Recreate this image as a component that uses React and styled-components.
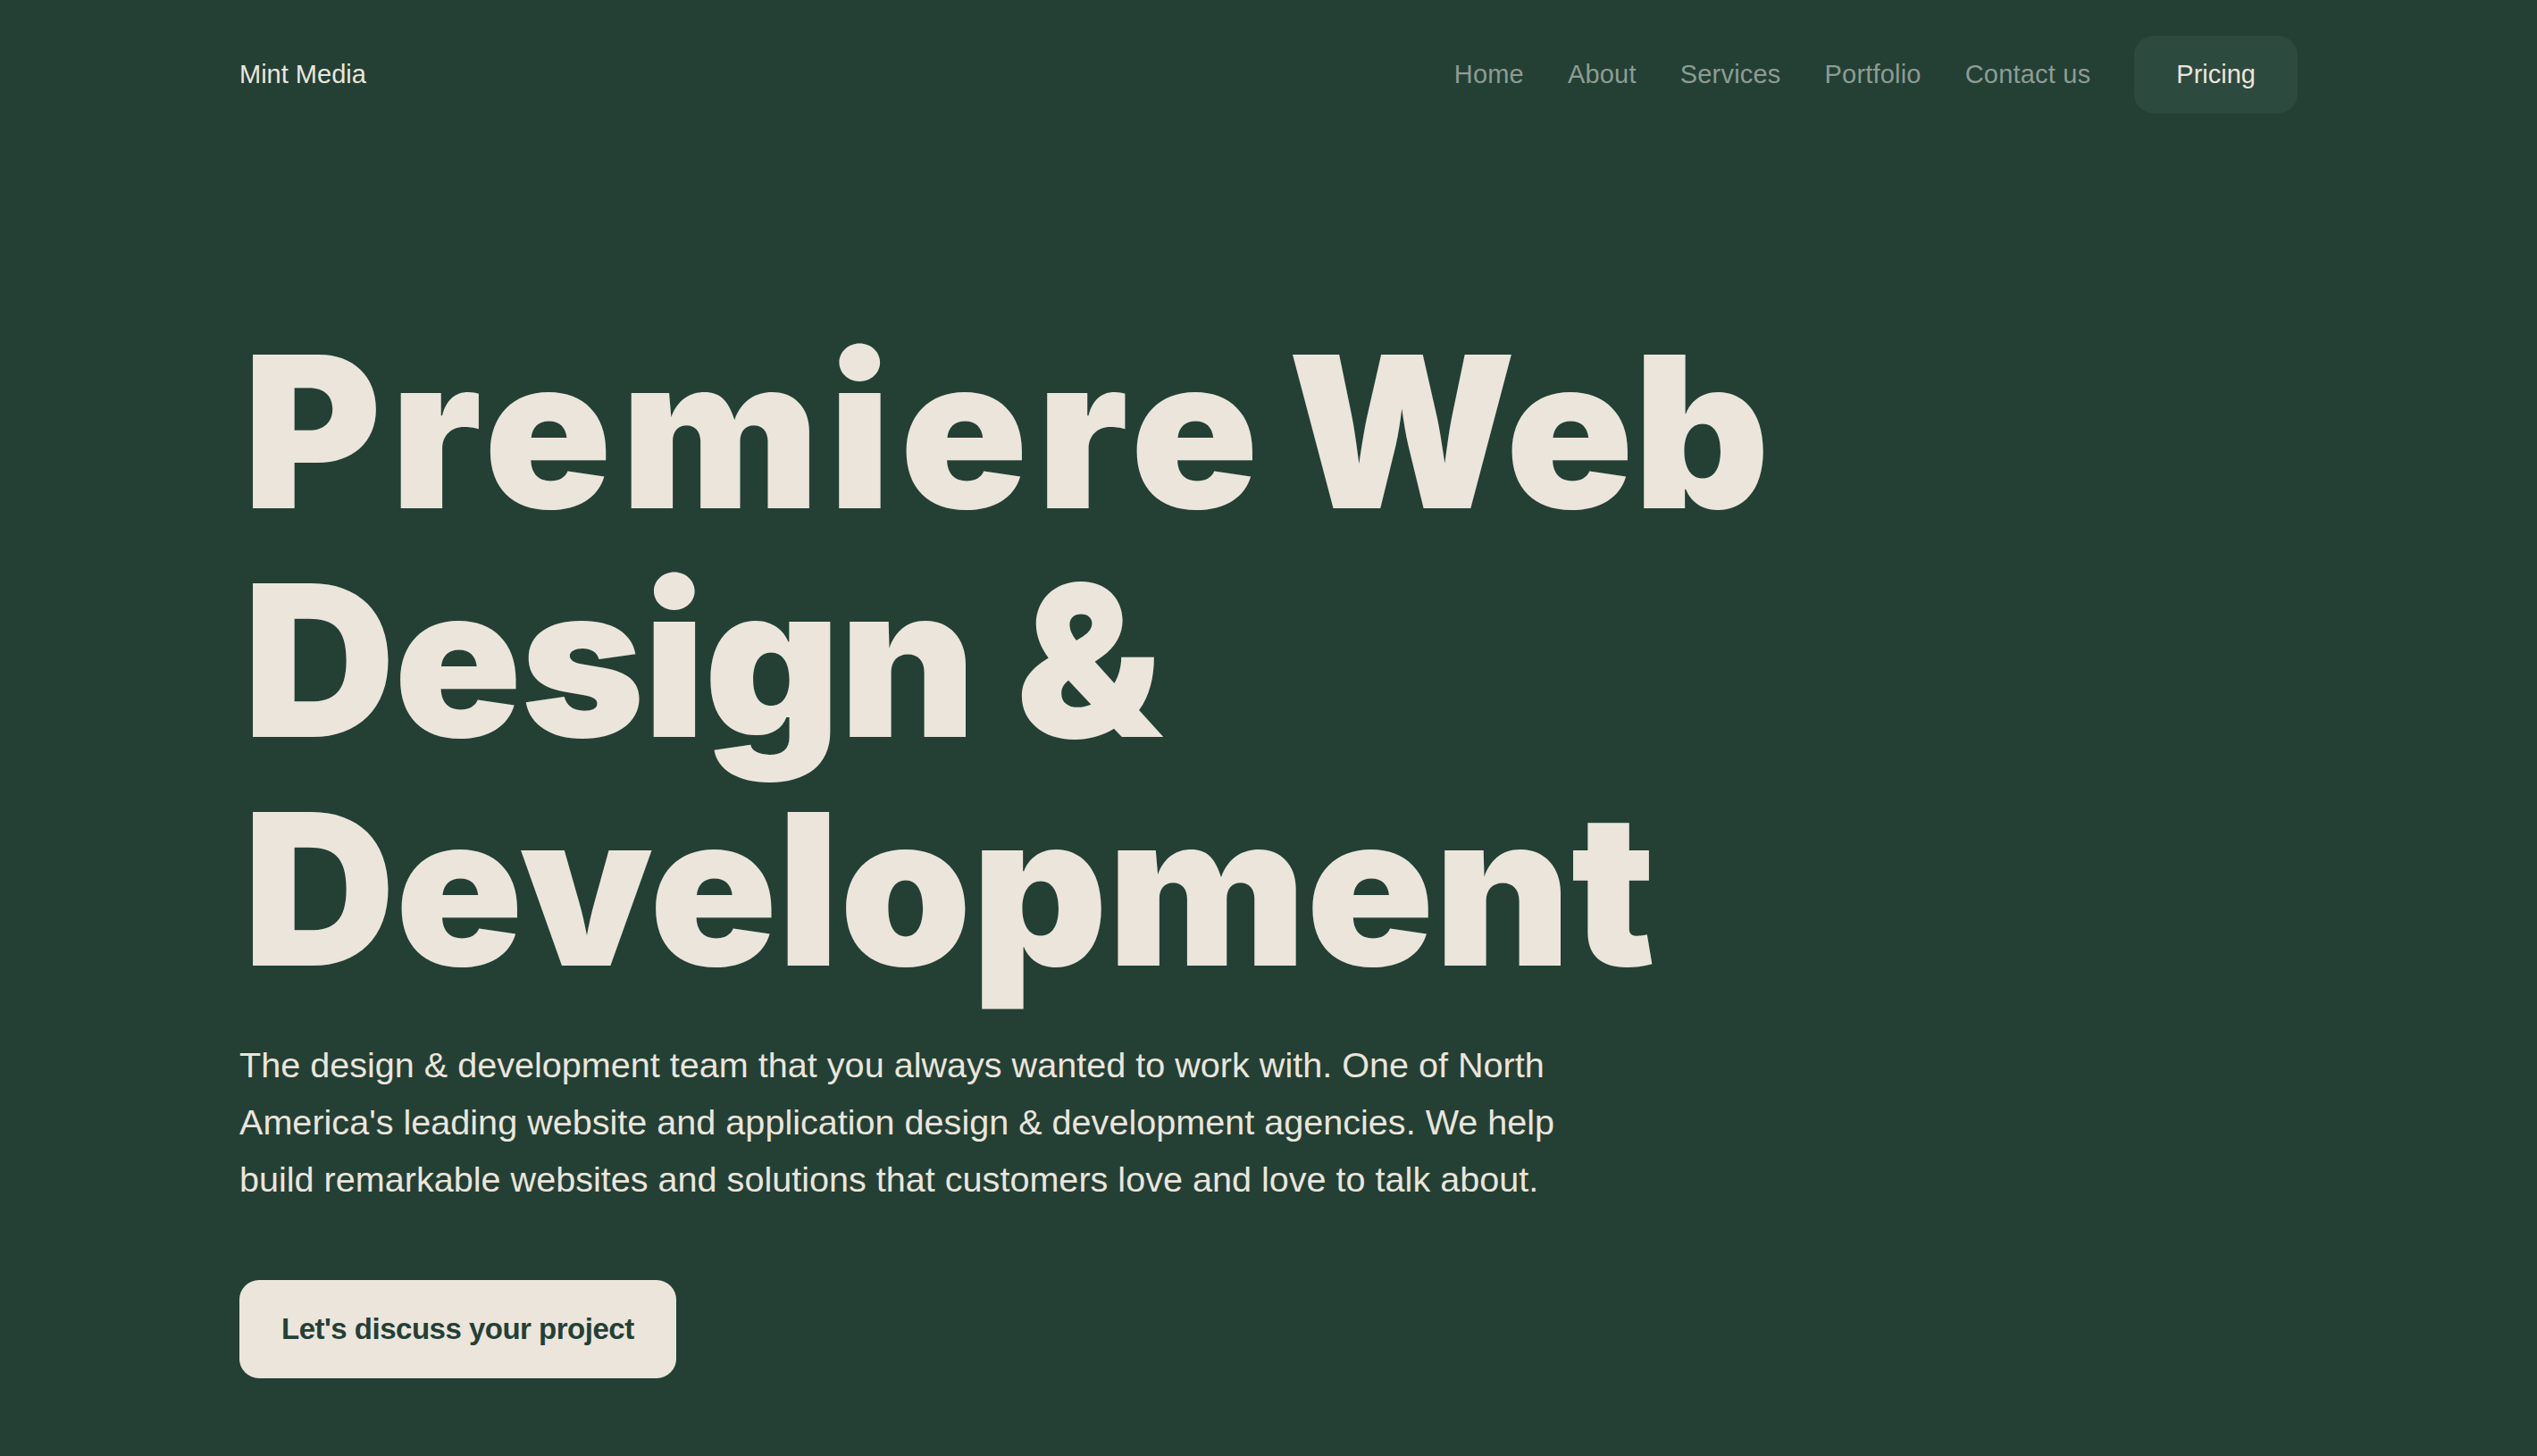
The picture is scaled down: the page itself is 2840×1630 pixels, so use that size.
import React from "react";
import styled, { createGlobalStyle } from "styled-components";

const Global = createGlobalStyle`
  html, body {
    margin: 0;
    padding: 0;
    background: #244035;
  }
  * { box-sizing: border-box; }
`;

const Page = styled.div`
  min-height: 1630px;
  background: #244035;
  color: #ebe5dc;
  font-family: "Liberation Sans", Arial, sans-serif;
`;

const Container = styled.div`
  width: 2304px;
  margin: 0 auto;
`;

const Header = styled.header`
  display: flex;
  align-items: center;
  justify-content: space-between;
  padding-top: 40px;
  height: 127px;
`;

const Logo = styled.a`
  font-size: 29px;
  color: #ebe5dc;
  text-decoration: none;
`;

const Nav = styled.nav`
  display: flex;
  align-items: center;
  gap: 49px;
`;

const NavLink = styled.a`
  font-size: 29px;
  letter-spacing: 0.2px;
  color: #8d9c92;
  text-decoration: none;
`;

const PricingButton = styled.a`
  display: flex;
  align-items: center;
  height: 87px;
  padding: 0 47px;
  border-radius: 22px;
  background: #2d4a3e;
  color: #ebe5dc;
  font-size: 29px;
  text-decoration: none;
`;

const Hero = styled.section`
  padding-top: 228px;
`;

const Title = styled.h1`
  margin: 0 0 0 4px;
  font-family: Inter, "Liberation Sans", sans-serif;
  font-weight: 900;
  font-size: 236px;
  line-height: 256px;
  letter-spacing: 0;
  color: #ebe5dc;
`;

const TitleLine = styled.span`
  display: block;
  white-space: nowrap;
  letter-spacing: ${(p) => p.$track || "0px"};
  word-spacing: ${(p) => p.$wordSpacing || "0px"};
`;

const Word = styled.span`
  letter-spacing: ${(p) => p.$track || "0px"};
`;

const Lead = styled.p`
  margin: 37px 0 0;
  font-size: 39.6px;
  line-height: 64px;
  letter-spacing: 0;
  color: #ebe5dc;
`;

const CTA = styled.a`
  display: inline-flex;
  align-items: center;
  margin-top: 81px;
  height: 110px;
  padding: 0 47px;
  border-radius: 22px;
  background: #ebe5dc;
  color: #244035;
  font-weight: 700;
  font-size: 33px;
  letter-spacing: -0.5px;
  text-decoration: none;
`;

export default function App() {
  return (
    <Page>
      <Global />
      <Container>
        <Header>
          <Logo href="#">Mint Media</Logo>
          <Nav>
            <NavLink href="#">Home</NavLink>
            <NavLink href="#">About</NavLink>
            <NavLink href="#">Services</NavLink>
            <NavLink href="#">Portfolio</NavLink>
            <NavLink href="#">Contact us</NavLink>
            <PricingButton href="#">Pricing</PricingButton>
          </Nav>
        </Header>
        <Hero>
          <Title>
            <TitleLine $wordSpacing="-24px">
              <Word $track="10px">Premiere</Word> Web
            </TitleLine>
            <TitleLine $track="-1.5px">Design &amp;</TitleLine>
            <TitleLine>Development</TitleLine>
          </Title>
          <Lead>
            The design &amp; development team that you always wanted to work with. One of North
            <br />
            America's leading website and application design &amp; development agencies. We help
            <br />
            build remarkable websites and solutions that customers love and love to talk about.
          </Lead>
          <CTA href="#">Let's discuss your project</CTA>
        </Hero>
      </Container>
    </Page>
  );
}
